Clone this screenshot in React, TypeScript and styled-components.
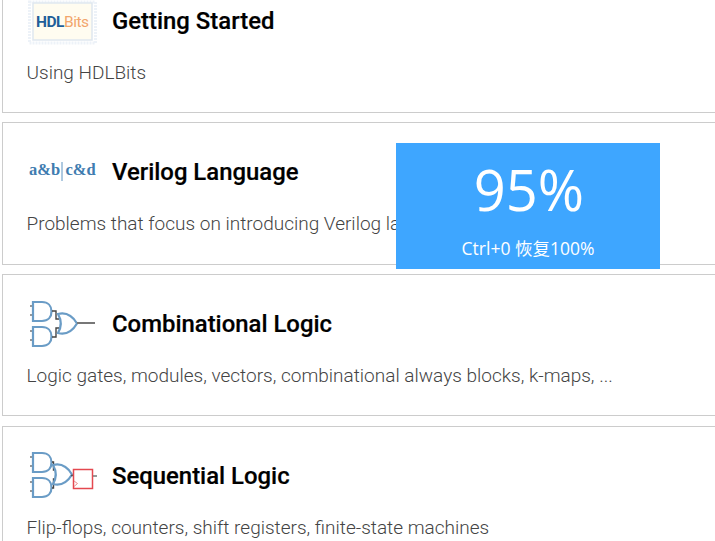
import React from 'react';
import styled, { createGlobalStyle } from 'styled-components';

const GlobalStyle = createGlobalStyle`
  html, body {
    margin: 0;
    padding: 0;
    height: 100%;
    overflow: hidden;
    background: #fff;
  }
`;

const Page = styled.div`
  position: relative;
  width: 715px;
  height: 541px;
  overflow: hidden;
  font-family: Roboto, "Liberation Sans", sans-serif;
`;

const List = styled.div`
  display: flex;
  flex-direction: column;
  gap: 9.3px;
  margin: -29.5px -20px 0 2px;
`;

const Card = styled.section`
  box-sizing: border-box;
  height: 142.4px;
  padding: 17px 24px 0;
  border: 1px solid #ccc;
  background: #fff;
`;

const CardHead = styled.div`
  display: flex;
  align-items: center;
  height: 64px;
  gap: 15px;
`;

const IconSlot = styled.div`
  flex: none;
  width: 70px;
  height: 64px;
  display: flex;
  align-items: center;
  justify-content: center;
`;

const Title = styled.h2`
  margin: 0;
  font-size: 23.9px;
  font-weight: 500;
  line-height: 28px;
  color: #000;
  -webkit-text-stroke: 0.2px #000;
`;

const Description = styled.p`
  margin: 8px 0 0 -0.5px;
  font-size: 19px;
  font-weight: 300;
  line-height: 24px;
  color: #444;
  white-space: nowrap;
`;

const Toast = styled.div`
  position: absolute;
  left: 396px;
  top: 143px;
  width: 264px;
  height: 126px;
  background: #3ea6ff;
  color: #fff;
  text-align: center;
  font-family: "Open Sans", "Noto Sans CJK SC", sans-serif;
`;

const ToastValue = styled.div`
  margin: 11px 0 0 2px;
  font-size: 56px;
  line-height: 70px;
`;

const ToastHint = styled.div`
  margin-top: 13px;
  font-size: 17.5px;
  line-height: 22px;
`;

const HdlLogo = () => (
  <svg width="70" height="50" viewBox="0 0 70 50">
    <rect x="2.500" y="6" width="66" height="41" fill="none" stroke="#edf2f8" strokeWidth="3" strokeDasharray="2 1" />
    <rect x="6" y="7" width="59" height="37" fill="#fffcf0" stroke="#dfe7ef" strokeWidth="1.5" />
    <text x="9" y="31" fontFamily="Roboto, sans-serif" fontSize="15.5" fontWeight="700" fill="#1f5f99" textLength="53">
      HDL
      <tspan fill="#f2a56b" fontWeight="400">Bits</tspan>
    </text>
  </svg>
);

const AbLogo = () => (
  <svg width="70" height="24" viewBox="0 0 70 24">
    <g fontFamily="'Liberation Serif', serif" fontSize="16.5" fontWeight="700" fill="#3f7cb0">
      <text x="2" y="15">a&amp;b</text>
      <text x="38.500" y="15">c&amp;d</text>
    </g>
    <path d="M35 2V21" stroke="#5f94c2" strokeWidth="1" />
  </svg>
);

const Gate = ({ y }: { y: number }) => (
  <g transform={`translate(6 ${y})`}>
    <path d="M-3 4H0M-3 13H0" stroke="#777" strokeWidth="1.6" fill="none" />
    <path d="M0 0H9C15 0 18.500 4 18.500 9.500C18.500 15 15 19 9 19H0Z" stroke="#6a9cc6" strokeWidth="2.200" fill="none" />
  </g>
);

const GateTree = ({ shift, dx }: { shift: number; dx: number }) => (
  <g transform={`translate(0 ${shift})`}>
    <Gate y={3} />
    <Gate y={28} />
    <path d={`M25 12H${29 - dx / 2}V20H${32 - dx}M25 38H${29 - dx / 2}V29H${32 - dx}`} stroke="#444" strokeWidth="1.4" fill="none" />
    <path
      transform={`translate(${-dx} 0)`}
      d="M31 15C39 13 45 16 50 24.500C45 33 39 36 31 34C34.500 28 34.500 21 31 15Z"
      stroke="#6a9cc6"
      strokeWidth="2.200"
      fill="none"
    />
  </g>
);

const CombIcon = () => (
  <svg width="70" height="50" viewBox="0 0 70 50">
    <GateTree shift={0} dx={0} />
    <path d="M50 24H68" stroke="#777" strokeWidth="2" fill="none" />
  </svg>
);

const SeqIcon = () => (
  <svg width="70" height="50" viewBox="0 0 70 50">
    <GateTree shift={-1} dx={5} />
    <path d="M44 24.500H47" stroke="#555" strokeWidth="1.5" fill="none" />
    <rect x="46.500" y="18.500" width="19" height="19" stroke="#e4484f" strokeWidth="1.5" fill="#fff" />
    <path d="M47 30L50.500 32.500L47 35.500" stroke="#e98a8e" strokeWidth="1" fill="none" />
    <path d="M66 25H70" stroke="#777" strokeWidth="1.5" fill="none" />
  </svg>
);

const courses = [
  { title: 'Getting Started', text: 'Using HDLBits', icon: <HdlLogo /> },
  {
    title: 'Verilog Language',
    text: 'Problems that focus on introducing Verilog language features',
    icon: <AbLogo />,
  },
  {
    title: 'Combinational Logic',
    text: 'Logic gates, modules, vectors, combinational always blocks, k-maps, ...',
    icon: <CombIcon />,
  },
  {
    title: 'Sequential Logic',
    text: 'Flip-flops, counters, shift registers, finite-state machines',
    icon: <SeqIcon />,
  },
];

export default function App() {
  return (
    <Page>
      <GlobalStyle />
      <List>
        {courses.map((course) => (
          <Card key={course.title}>
            <CardHead>
              <IconSlot>{course.icon}</IconSlot>
              <Title>{course.title}</Title>
            </CardHead>
            <Description>{course.text}</Description>
          </Card>
        ))}
      </List>
      <Toast>
        <ToastValue>95%</ToastValue>
        <ToastHint>Ctrl+0 恢复100%</ToastHint>
      </Toast>
    </Page>
  );
}
